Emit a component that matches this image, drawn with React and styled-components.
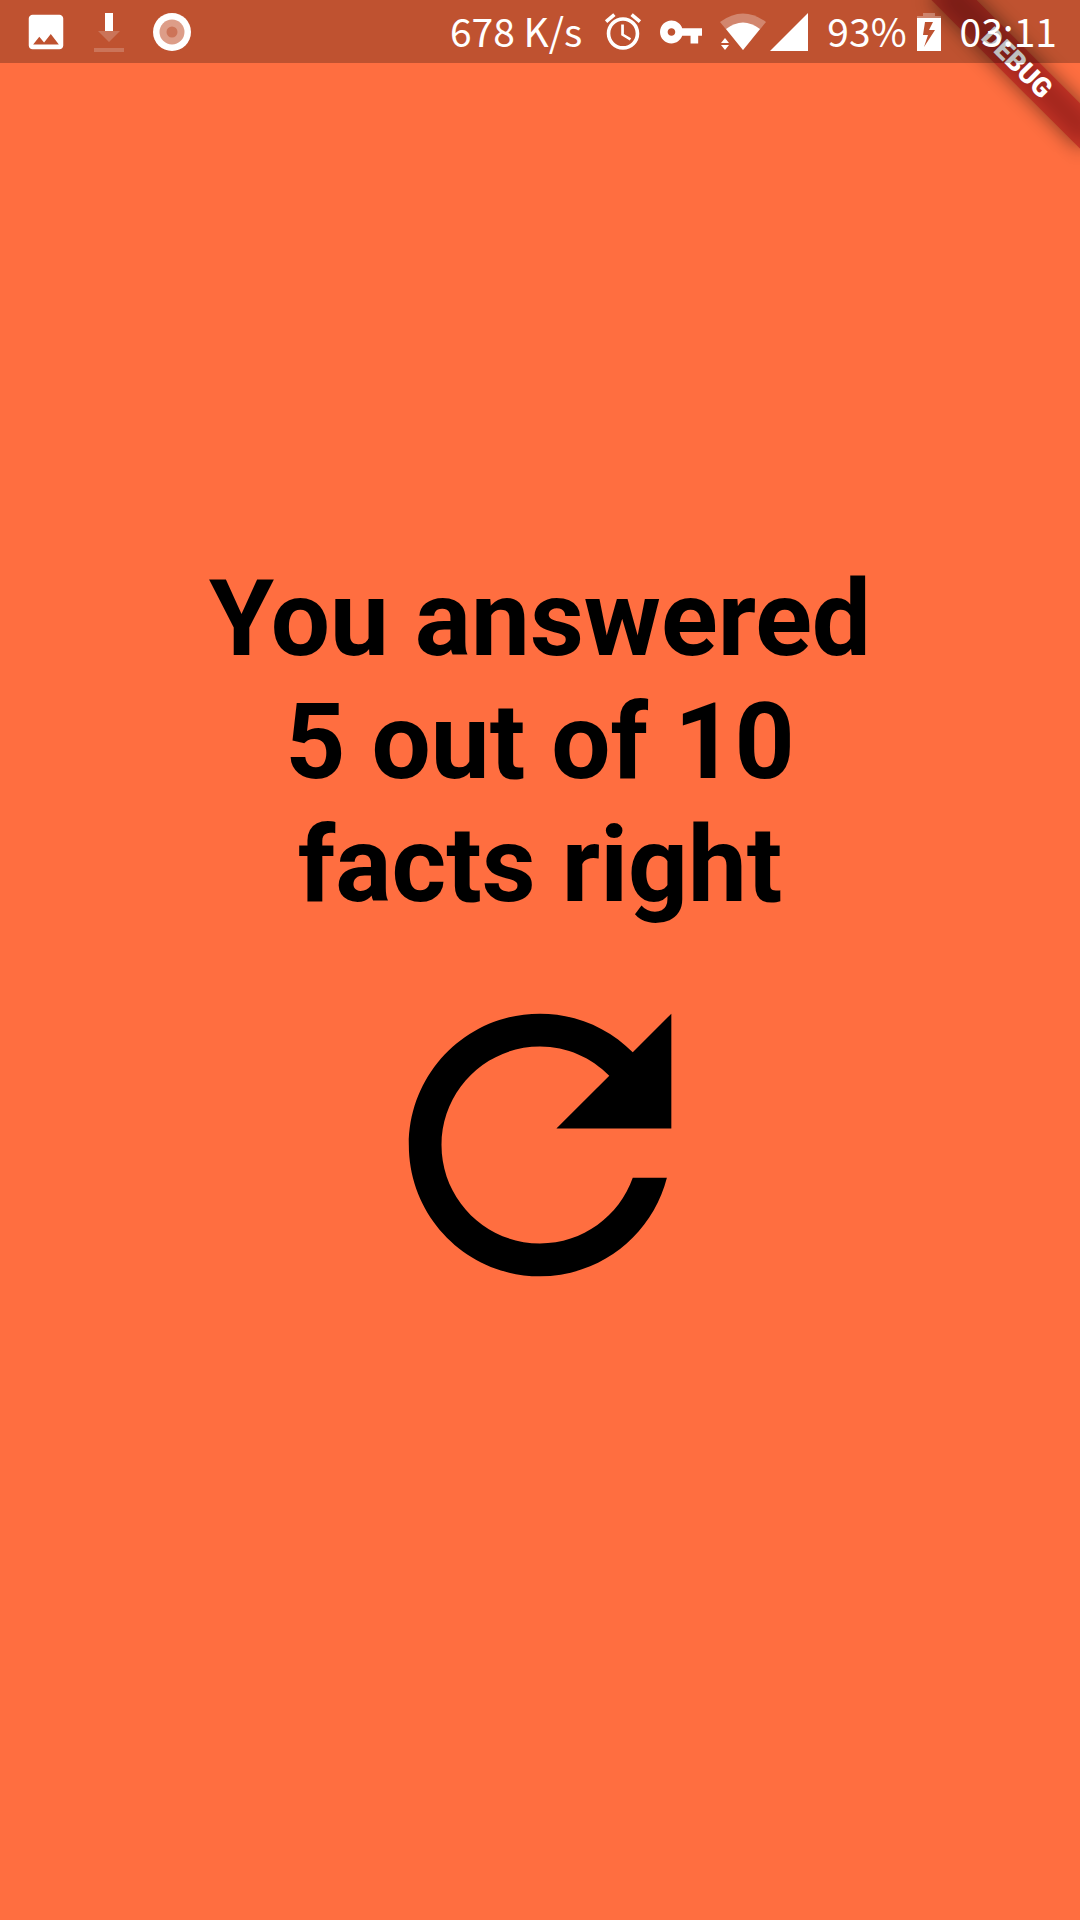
import React from "react";
import styled, { createGlobalStyle } from "styled-components";

const GlobalStyle = createGlobalStyle`
  *, *::before, *::after { box-sizing: border-box; }
  html, body { margin: 0; background: #ff6e40; }
`;

const Screen = styled.div`
  position: relative;
  display: flex;
  flex-direction: column;
  min-height: 100vh;
  overflow: hidden;
  background: #ff6e40;
  font-family: Roboto, sans-serif;
`;

const StatusBar = styled.header`
  position: absolute;
  z-index: 2;
  top: 0;
  left: 0;
  right: 0;
  display: flex;
  align-items: center;
  justify-content: space-between;
  height: 63px;
  padding: 0 23px;
  background: rgba(0, 0, 0, 0.25);
  color: #fff;
`;

const StatusGroup = styled.div`
  display: flex;
  align-items: center;
  gap: ${(p) => p.$gap}px;
`;

const StatusText = styled.span`
  padding-bottom: 4px;
  font-family: "Noto Sans CJK SC", "Noto Sans", sans-serif;
  font-size: 39px;
  line-height: 56px;
  white-space: pre;
`;

const Glyph = styled.svg`
  display: block;
  flex: none;
  width: ${(p) => p.$w}px;
  height: ${(p) => p.$h}px;
  fill: currentColor;
`;

const Corner = styled.div`
  position: absolute;
  z-index: 1;
  top: 0;
  right: 0;
  width: 200px;
  height: 200px;
  overflow: hidden;
  pointer-events: none;
`;

const Ribbon = styled.div`
  position: absolute;
  top: 47px;
  right: -42px;
  width: 210px;
  height: 32px;
  transform: rotate(45deg);

  &::before {
    content: "";
    position: absolute;
    inset: 0;
    background: rgba(0, 0, 0, 0.5);
    filter: blur(10px);
  }
`;

const RibbonLabel = styled.span`
  position: relative;
  display: block;
  background: rgba(183, 28, 28, 0.63);
  color: #fff;
  font-size: 27px;
  font-weight: 900;
  line-height: 32px;
  text-align: center;
`;

const Result = styled.main`
  flex: 1;
  display: flex;
  flex-direction: column;
  align-items: center;
  justify-content: center;
`;

const Score = styled.h1`
  margin: 0;
  color: #000;
  font-size: 105px;
  font-weight: 700;
  line-height: 123px;
  text-align: center;
`;

const RestartButton = styled.button`
  padding: 21px;
  border: 0;
  background: none;
  color: #000;
  cursor: pointer;
`;

const ImageIcon = () => (
  <Glyph $w={46} $h={46} viewBox="0 0 24 24" aria-hidden="true">
    <path d="M21 19V5c0-1.100-.9-2-2-2H5c-1.100 0-2 .9-2 2v14c0 1.100.9 2 2 2h14c1.100 0 2-.9 2-2zM8.500 14.500l2.500 3L14.500 13l4.200 5.500H5.300z" />
  </Glyph>
);

const DownloadIcon = () => (
  <Glyph $w={46} $h={46} viewBox="0 0 46 46" aria-hidden="true">
    <path d="M19 4h8v18h-8z" />
    <path d="M12 22h22L23 33zM8 39h30v4H8z" opacity="0.2" />
  </Glyph>
);

const RecordIcon = () => (
  <Glyph $w={46} $h={46} viewBox="0 0 46 46" aria-hidden="true">
    <circle cx="23" cy="23" r="19" />
    <circle cx="23" cy="23" r="12.5" fill="#dd9d88" />
    <circle cx="23" cy="23" r="5.500" fill="#cd7458" />
  </Glyph>
);

const AlarmIcon = () => (
  <Glyph $w={38} $h={38} viewBox="1.500 1.700 21 21" aria-hidden="true">
    <path d="M22 5.720l-4.600-3.860-1.290 1.530 4.600 3.860L22 5.720zM7.880 3.390L6.600 1.860 2 5.710l1.290 1.530 4.590-3.850zM12.500 8H11v6l4.750 2.850.75-1.230-4-2.370V8zM12 4c-4.970 0-9 4.030-9 9s4.020 9 9 9a9 9 0 0 0 0-18zm0 16c-3.870 0-7-3.130-7-7s3.130-7 7-7 7 3.130 7 7-3.130 7-7 7z" />
  </Glyph>
);

const KeyIcon = () => (
  <Glyph $w={42} $h={24} viewBox="1 6 22 12" aria-hidden="true">
    <path d="M12.650 10C11.830 7.670 9.610 6 7 6c-3.310 0-6 2.690-6 6s2.690 6 6 6c2.610 0 4.830-1.670 5.650-4H17v4h4v-4h2v-4H12.650zM7 14c-1.100 0-2-.9-2-2s.9-2 2-2 2 .9 2 2-.9 2-2 2z" />
  </Glyph>
);

const WifiIcon = () => (
  <Glyph $w={46} $h={38} viewBox="0 0 46 38" aria-hidden="true">
    <path d="M0 9Q23 -8 46 9L23 37z" opacity="0.3" />
    <path d="M6 16Q23 3 40 16L23 37z" />
    <path d="M5 25l4 5H1zM1 32h8l-4 5z" />
  </Glyph>
);

const SignalIcon = () => (
  <Glyph $w={38} $h={38} viewBox="0 0 38 38" aria-hidden="true">
    <path d="M38 0v38H0z" />
  </Glyph>
);

const BatteryIcon = () => (
  <Glyph $w={24} $h={38} viewBox="0 0 24 38" aria-hidden="true">
    <path d="M6 0h12v3h6v2H0V3h6z" opacity="0.3" />
    <path
      fillRule="evenodd"
      d="M0 5h24v33H0zM8 9L6 22h5L7 34l11-17h-6l4-8z"
    />
  </Glyph>
);

const RefreshIcon = () => (
  <Glyph $w={394} $h={394} viewBox="0 0 24 24" aria-hidden="true">
    <path d="M17.650 6.350C16.200 4.900 14.210 4 12 4c-4.420 0-7.990 3.580-7.990 8s3.570 8 7.990 8c3.730 0 6.840-2.550 7.730-6h-2.080c-.82 2.330-3.040 4-5.650 4-3.310 0-6-2.690-6-6s2.690-6 6-6c1.660 0 3.140.69 4.220 1.780L13 11h7V4l-2.350 2.350z" />
  </Glyph>
);

export default function App() {
  return (
    <Screen>
      <GlobalStyle />
      <StatusBar>
        <StatusGroup $gap={17}>
          <ImageIcon />
          <DownloadIcon />
          <RecordIcon />
        </StatusGroup>
        <StatusGroup $gap={19}>
          <StatusGroup $gap={22}>
            <StatusText>678 K/s</StatusText>
            <StatusGroup $gap={18}>
              <AlarmIcon />
              <KeyIcon />
              <StatusGroup $gap={4}>
                <WifiIcon />
                <SignalIcon />
              </StatusGroup>
            </StatusGroup>
          </StatusGroup>
          <StatusGroup $gap={10}>
            <StatusText>93%</StatusText>
            <BatteryIcon />
          </StatusGroup>
          <StatusText>03:11</StatusText>
        </StatusGroup>
      </StatusBar>
      <Result>
        <Score>
          You answered
          <br />5 out of 10
          <br />
          facts right
        </Score>
        <RestartButton type="button" aria-label="Play again">
          <RefreshIcon />
        </RestartButton>
      </Result>
      <Corner>
        <Ribbon>
          <RibbonLabel>DEBUG</RibbonLabel>
        </Ribbon>
      </Corner>
    </Screen>
  );
}
